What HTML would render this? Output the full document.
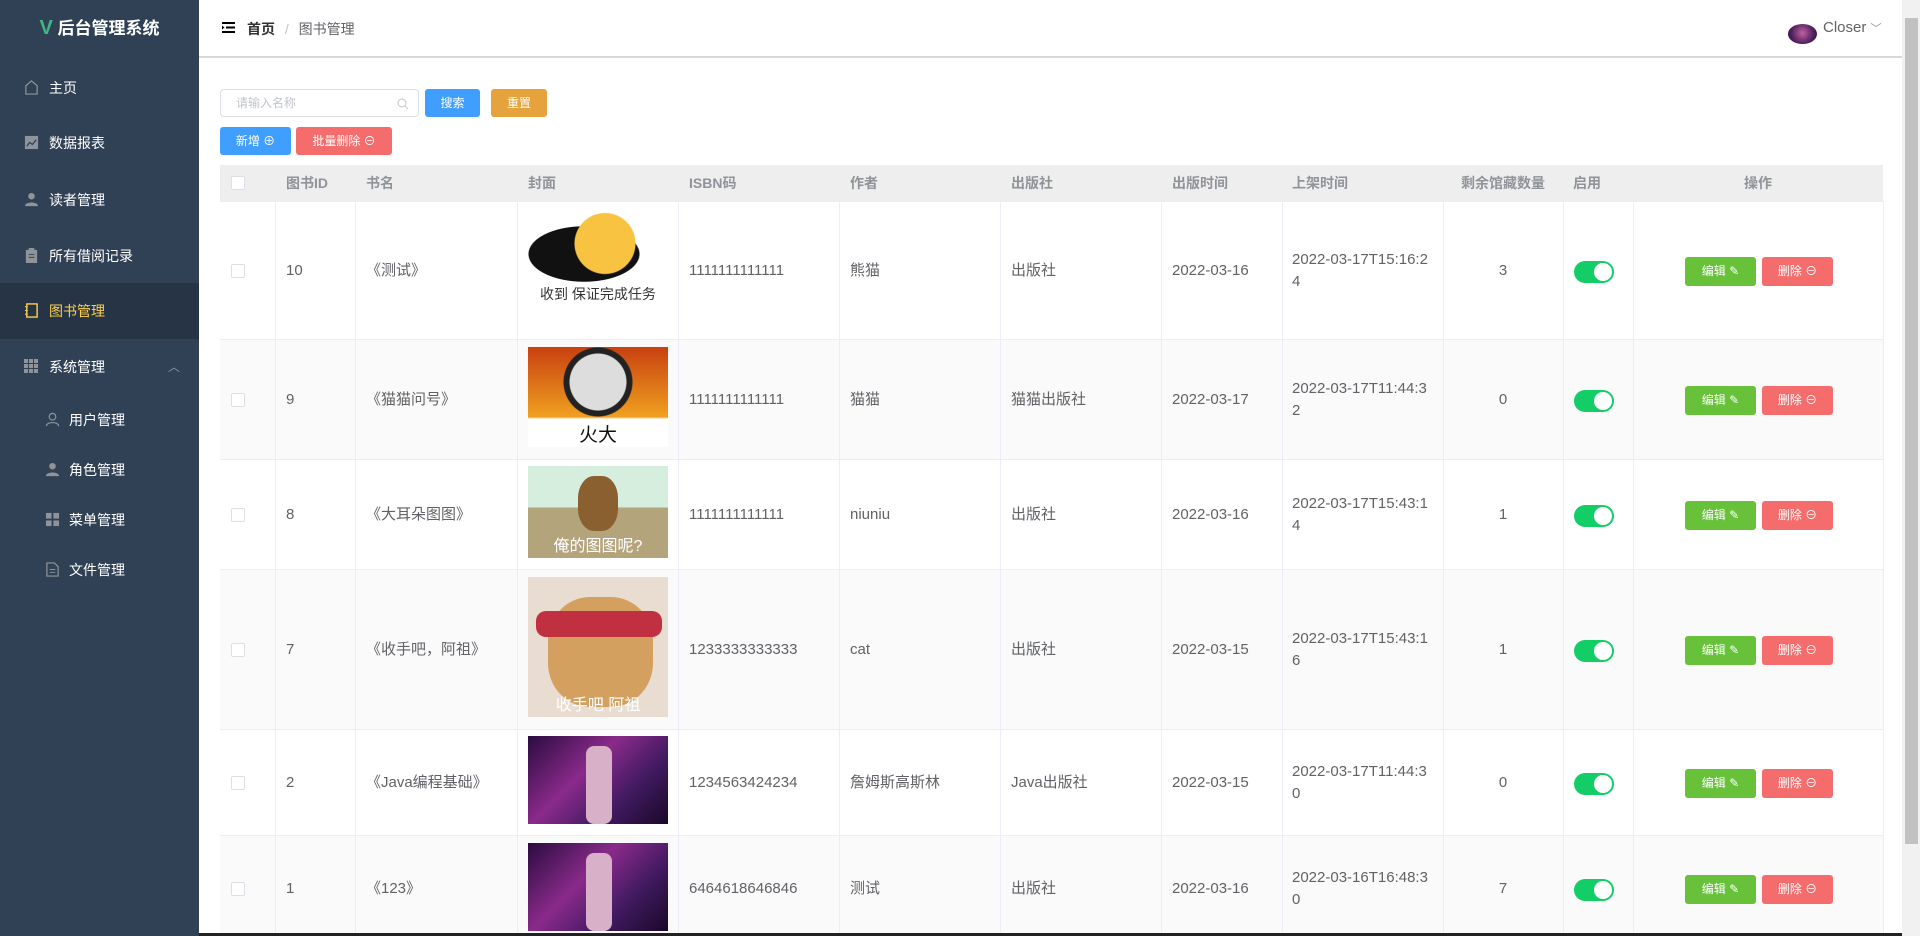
<!DOCTYPE html>
<html><head><meta charset="utf-8"><style>
*{margin:0;padding:0;box-sizing:border-box}
body{width:1920px;height:936px;overflow:hidden;background:#fff;font-family:"Liberation Sans","Noto Sans CJK SC",sans-serif;position:relative;color:#606266}
.side{position:absolute;left:0;top:0;width:199px;height:936px;background:#304156}
.logo{position:absolute;top:14px;left:0;width:199px;text-align:center;color:#fff;font-size:17px;font-weight:bold;line-height:28px}
.mi{position:absolute;left:0;width:199px;height:56px;color:#fff;font-size:14px;line-height:56px;padding-left:49px}
.mi.act{background:#263445;color:#ffd04b}
.mi .ic{position:absolute;left:24px;top:20px;width:15px;height:15px}
.sub{padding-left:69px;height:50px;line-height:50px}
.sub .ic{left:45px;top:17px}
.hdr{position:absolute;left:199px;top:0;right:18px;height:58px;border-bottom:2px solid #d8d8d8}
.scroll{position:absolute;right:0;top:0;width:18px;height:936px;background:#f1f1f1}
.thumb{position:absolute;right:2px;top:18px;width:13px;height:826px;background:#c1c1c1}
.btn{position:absolute;height:28px;border-radius:3px;color:#fff;font-size:12px;text-align:center;line-height:28px}
.c{position:absolute;font-size:15px;color:#606266;white-space:nowrap;line-height:22px}
.ts{white-space:normal;word-break:break-all;width:136px;line-height:22px}
.row{position:absolute;left:220px;width:1663px;border-bottom:1px solid #ebeef5}
.vl{position:absolute;top:201px;height:735px;width:1px;background:#ebeef5}
.th{position:absolute;top:165px;height:37px;line-height:37px;font-size:14px;font-weight:bold;color:#909399;white-space:nowrap}
.cb{position:absolute;width:14px;height:14px;border:1px solid #dcdfe6;border-radius:2px;background:#fff}
.sw{position:absolute;width:40px;height:22px;border-radius:11px;background:#13ce66}
.sw:after{content:"";position:absolute;right:2px;top:2px;width:18px;height:18px;border-radius:50%;background:#fff}
.eb,.db{position:absolute;height:29px;line-height:29px;border-radius:3px;color:#fff;font-size:12px;text-align:center;white-space:nowrap}
.eb{background:#67c23a;width:71px}
.db{background:#f56c6c;width:71px}
.img{position:absolute;left:528px;width:140px;overflow:hidden;color:#fff;font-size:16px;text-align:center}
</style></head><body>
<div class="side">
<div class="logo"><span style="color:#41b883;font-size:20px">V</span> 后台管理系统</div>
<div class="mi" style="top:60px"><svg class="ic" viewBox="0 0 16 16"><path d="M2 15V6l6-5 6 5v9z" fill="none" stroke="#909399" stroke-width="1.3"/></svg>主页</div>
<div class="mi" style="top:115px"><svg class="ic" viewBox="0 0 16 16"><rect x="1" y="1" width="14" height="14" fill="#909399"/><path d="M3 12l3-4 3 2 4-5" stroke="#304156" fill="none" stroke-width="1.3"/></svg>数据报表</div>
<div class="mi" style="top:172px"><svg class="ic" viewBox="0 0 16 16"><circle cx="8" cy="4.5" r="3.5" fill="#909399"/><path d="M1 15c0-5 14-5 14 0z" fill="#909399"/></svg>读者管理</div>
<div class="mi" style="top:228px"><svg class="ic" viewBox="0 0 16 16"><rect x="2" y="2" width="12" height="14" fill="#909399"/><rect x="5" y="0" width="6" height="3" fill="#909399"/><path d="M5 7h6M5 10h6" stroke="#304156"/></svg>所有借阅记录</div>
<div class="mi act" style="top:283px"><svg class="ic" viewBox="0 0 16 16"><rect x="3" y="1" width="11" height="14" fill="none" stroke="#ffd04b" stroke-width="1.5"/><path d="M1 4h3M1 8h3M1 12h3" stroke="#ffd04b"/></svg>图书管理</div>
<div class="mi" style="top:339px"><svg class="ic" viewBox="0 0 15 15" fill="#909399"><rect x="0" y="0" width="4" height="4"/><rect x="5" y="0" width="4" height="4"/><rect x="10" y="0" width="4" height="4"/><rect x="0" y="5" width="4" height="4"/><rect x="5" y="5" width="4" height="4"/><rect x="10" y="5" width="4" height="4"/><rect x="0" y="10" width="4" height="4"/><rect x="5" y="10" width="4" height="4"/><rect x="10" y="10" width="4" height="4"/></svg>系统管理<span style="position:absolute;left:168px;top:0;color:#909399;font-size:12px">︿</span></div>
<div class="mi sub" style="top:395px"><svg class="ic" viewBox="0 0 16 16"><circle cx="8" cy="5" r="3.5" fill="none" stroke="#909399" stroke-width="1.3"/><path d="M1.5 15c0-5 13-5 13 0" fill="none" stroke="#909399" stroke-width="1.3"/></svg>用户管理</div>
<div class="mi sub" style="top:445px"><svg class="ic" viewBox="0 0 16 16"><circle cx="8" cy="4.5" r="3.5" fill="#909399"/><path d="M1 15c0-5 14-5 14 0z" fill="#909399"/></svg>角色管理</div>
<div class="mi sub" style="top:495px"><svg class="ic" viewBox="0 0 16 16" fill="#909399"><rect x="1" y="1" width="6" height="6"/><rect x="9" y="1" width="6" height="6"/><rect x="1" y="9" width="6" height="6"/><rect x="9" y="9" width="6" height="6"/></svg>菜单管理</div>
<div class="mi sub" style="top:545px"><svg class="ic" viewBox="0 0 16 16"><path d="M2 1h8l4 4v10H2z" fill="none" stroke="#909399" stroke-width="1.3"/><path d="M5 8h6M5 11h6" stroke="#909399"/></svg>文件管理</div>
</div>
<div class="hdr">
<svg style="position:absolute;left:23px;top:22px" width="13" height="11" viewBox="0 0 13 11"><path d="M0 1h13M4 5.5h9M0 10h13" stroke="#000" stroke-width="2"/><path d="M0 3.5l2.5 2-2.5 2z" fill="#000"/></svg>
<div style="position:absolute;left:48px;top:19px;font-size:14px;color:#303133;font-weight:bold;white-space:nowrap">首页 <span style="color:#c0c4cc;font-weight:normal;margin:0 6px">/</span> <span style="color:#606266;font-weight:normal">图书管理</span></div>
<div style="position:absolute;left:1589px;top:24px;width:29px;height:20px;border-radius:50%;background:radial-gradient(circle at 50% 45%,#c060a0,#502060 60%,#201030)"></div>
<div style="position:absolute;left:1624px;top:19px;font-size:15px;color:#606266;white-space:nowrap">Closer <span style="font-size:11px;color:#909399">﹀</span></div>
</div>
<div class="scroll"><div class="thumb"></div></div>

<div style="position:absolute;left:220px;top:89px;width:199px;height:28px;border:1px solid #dcdfe6;border-radius:4px;font-size:12px;color:#c0c4cc;line-height:26px;padding-left:15px">请输入名称<svg style="position:absolute;right:10px;top:8px" width="11" height="11" viewBox="0 0 11 11"><circle cx="5" cy="5" r="4" fill="none" stroke="#c0c4cc"/><path d="M8 8l3 3" stroke="#c0c4cc"/></svg></div>
<div class="btn" style="left:425px;top:89px;width:55px;background:#409eff">搜索</div>
<div class="btn" style="left:491px;top:89px;width:56px;background:#e6a23c">重置</div>
<div class="btn" style="left:220px;top:127px;width:71px;background:#409eff">新增 ⊕</div>
<div class="btn" style="left:296px;top:127px;width:96px;background:#f56c6c">批量删除 ⊖</div>

<div style="position:absolute;left:220px;top:165px;width:1663px;height:37px;background:#eeeeee"></div>
<div class="cb" style="left:231px;top:176px"></div>
<div class="th" style="left:286px">图书ID</div>
<div class="th" style="left:366px">书名</div>
<div class="th" style="left:528px">封面</div>
<div class="th" style="left:689px">ISBN码</div>
<div class="th" style="left:850px">作者</div>
<div class="th" style="left:1011px">出版社</div>
<div class="th" style="left:1172px">出版时间</div>
<div class="th" style="left:1292px">上架时间</div>
<div class="th" style="left:1443px;width:120px;text-align:center">剩余馆藏数量</div>
<div class="th" style="left:1573px">启用</div>
<div class="th" style="left:1633px;width:250px;text-align:center">操作</div>

<div class="row" style="top:202px;height:138px"></div>
<div class="row" style="top:340px;height:120px;background:#fafafa"></div>
<div class="row" style="top:460px;height:110px"></div>
<div class="row" style="top:570px;height:160px;background:#fafafa"></div>
<div class="row" style="top:730px;height:106px"></div>
<div class="row" style="top:836px;height:100px;background:#fafafa"></div>
<div class="vl" style="left:275px"></div><div class="vl" style="left:355px"></div><div class="vl" style="left:517px"></div><div class="vl" style="left:678px"></div><div class="vl" style="left:839px"></div><div class="vl" style="left:1000px"></div><div class="vl" style="left:1161px"></div><div class="vl" style="left:1282px"></div><div class="vl" style="left:1443px"></div><div class="vl" style="left:1563px"></div><div class="vl" style="left:1633px"></div><div class="vl" style="left:1883px"></div>

<div class="img" style="top:208px;height:98px;background:#fff"><div style="position:absolute;left:0;top:4px;width:140px;height:70px;background:radial-gradient(circle at 55% 45%,#f7c340 0 30px,transparent 31px),radial-gradient(ellipse at 40% 60%,#111 0 55px,transparent 56px)"></div><div style="position:absolute;bottom:2px;width:100%;color:#333;font-size:14px">收到 保证完成任务</div></div>
<div class="img" style="top:347px;height:100px;background:linear-gradient(#fff 0 0) 0 73px/100% 27px no-repeat,radial-gradient(circle at 50% 35%,#ddd 0 28px,#222 29px 34px,transparent 35px),linear-gradient(#c84010,#f0a020 70%,#fff 72%)"><div style="position:absolute;bottom:0;width:100%;color:#111;font-size:19px">火大</div></div>
<div class="img" style="top:466px;height:92px;background:linear-gradient(#d6eedd 0 45%,#b4a47c 45%)"><div style="position:absolute;left:50px;top:10px;width:40px;height:55px;border-radius:40%;background:#8a6030"></div><div style="position:absolute;bottom:2px;width:100%">俺的图图呢?</div></div>
<div class="img" style="top:577px;height:140px;background:#e8ddd0"><div style="position:absolute;left:20px;top:20px;width:105px;height:110px;border-radius:40%;background:#d4a060"></div><div style="position:absolute;left:8px;top:34px;width:126px;height:26px;background:#c03040;border-radius:10px"></div><div style="position:absolute;bottom:2px;width:100%">收手吧 阿祖</div></div>
<div class="img" style="top:736px;height:88px;background:linear-gradient(135deg,#2a0c40,#8a2a8a 40%,#401a60 70%,#1a0828)"><div style="position:absolute;left:58px;top:10px;width:26px;height:78px;background:#d8b0c8;border-radius:8px"></div></div>
<div class="img" style="top:843px;height:88px;background:linear-gradient(135deg,#2a0c40,#8a2a8a 40%,#401a60 70%,#1a0828)"><div style="position:absolute;left:58px;top:10px;width:26px;height:78px;background:#d8b0c8;border-radius:8px"></div></div>

<div class="cb" style="left:231px;top:264px"></div><div class="c" style="left:286px;top:260px">10</div><div class="c" style="left:366px;top:260px">《测试》</div><div class="c" style="left:689px;top:260px">1111111111111</div><div class="c" style="left:850px;top:260px">熊猫</div><div class="c" style="left:1011px;top:260px">出版社</div><div class="c" style="left:1172px;top:260px">2022-03-16</div><div class="c ts" style="left:1292px;top:249px">2022-03-17T15:16:24</div><div class="c" style="left:1443px;top:260px;width:120px;text-align:center">3</div><div class="sw" style="left:1574px;top:261px"></div><div class="eb" style="left:1685px;top:257px">编辑 ✎</div><div class="db" style="left:1762px;top:257px">删除 ⊖</div>

<div class="cb" style="left:231px;top:393px"></div><div class="c" style="left:286px;top:389px">9</div><div class="c" style="left:366px;top:389px">《猫猫问号》</div><div class="c" style="left:689px;top:389px">1111111111111</div><div class="c" style="left:850px;top:389px">猫猫</div><div class="c" style="left:1011px;top:389px">猫猫出版社</div><div class="c" style="left:1172px;top:389px">2022-03-17</div><div class="c ts" style="left:1292px;top:378px">2022-03-17T11:44:32</div><div class="c" style="left:1443px;top:389px;width:120px;text-align:center">0</div><div class="sw" style="left:1574px;top:390px"></div><div class="eb" style="left:1685px;top:386px">编辑 ✎</div><div class="db" style="left:1762px;top:386px">删除 ⊖</div>

<div class="cb" style="left:231px;top:508px"></div><div class="c" style="left:286px;top:504px">8</div><div class="c" style="left:366px;top:504px">《大耳朵图图》</div><div class="c" style="left:689px;top:504px">1111111111111</div><div class="c" style="left:850px;top:504px">niuniu</div><div class="c" style="left:1011px;top:504px">出版社</div><div class="c" style="left:1172px;top:504px">2022-03-16</div><div class="c ts" style="left:1292px;top:493px">2022-03-17T15:43:14</div><div class="c" style="left:1443px;top:504px;width:120px;text-align:center">1</div><div class="sw" style="left:1574px;top:505px"></div><div class="eb" style="left:1685px;top:501px">编辑 ✎</div><div class="db" style="left:1762px;top:501px">删除 ⊖</div>

<div class="cb" style="left:231px;top:643px"></div><div class="c" style="left:286px;top:639px">7</div><div class="c" style="left:366px;top:639px">《收手吧，阿祖》</div><div class="c" style="left:689px;top:639px">1233333333333</div><div class="c" style="left:850px;top:639px">cat</div><div class="c" style="left:1011px;top:639px">出版社</div><div class="c" style="left:1172px;top:639px">2022-03-15</div><div class="c ts" style="left:1292px;top:628px">2022-03-17T15:43:16</div><div class="c" style="left:1443px;top:639px;width:120px;text-align:center">1</div><div class="sw" style="left:1574px;top:640px"></div><div class="eb" style="left:1685px;top:636px">编辑 ✎</div><div class="db" style="left:1762px;top:636px">删除 ⊖</div>

<div class="cb" style="left:231px;top:776px"></div><div class="c" style="left:286px;top:772px">2</div><div class="c" style="left:366px;top:772px">《Java编程基础》</div><div class="c" style="left:689px;top:772px">1234563424234</div><div class="c" style="left:850px;top:772px">詹姆斯高斯林</div><div class="c" style="left:1011px;top:772px">Java出版社</div><div class="c" style="left:1172px;top:772px">2022-03-15</div><div class="c ts" style="left:1292px;top:761px">2022-03-17T11:44:30</div><div class="c" style="left:1443px;top:772px;width:120px;text-align:center">0</div><div class="sw" style="left:1574px;top:773px"></div><div class="eb" style="left:1685px;top:769px">编辑 ✎</div><div class="db" style="left:1762px;top:769px">删除 ⊖</div>

<div class="cb" style="left:231px;top:882px"></div><div class="c" style="left:286px;top:878px">1</div><div class="c" style="left:366px;top:878px">《123》</div><div class="c" style="left:689px;top:878px">6464618646846</div><div class="c" style="left:850px;top:878px">测试</div><div class="c" style="left:1011px;top:878px">出版社</div><div class="c" style="left:1172px;top:878px">2022-03-16</div><div class="c ts" style="left:1292px;top:867px">2022-03-16T16:48:30</div><div class="c" style="left:1443px;top:878px;width:120px;text-align:center">7</div><div class="sw" style="left:1574px;top:879px"></div><div class="eb" style="left:1685px;top:875px">编辑 ✎</div><div class="db" style="left:1762px;top:875px">删除 ⊖</div>

<div style="position:absolute;left:199px;bottom:0;width:1703px;height:3px;background:#222"></div>
</body></html>
